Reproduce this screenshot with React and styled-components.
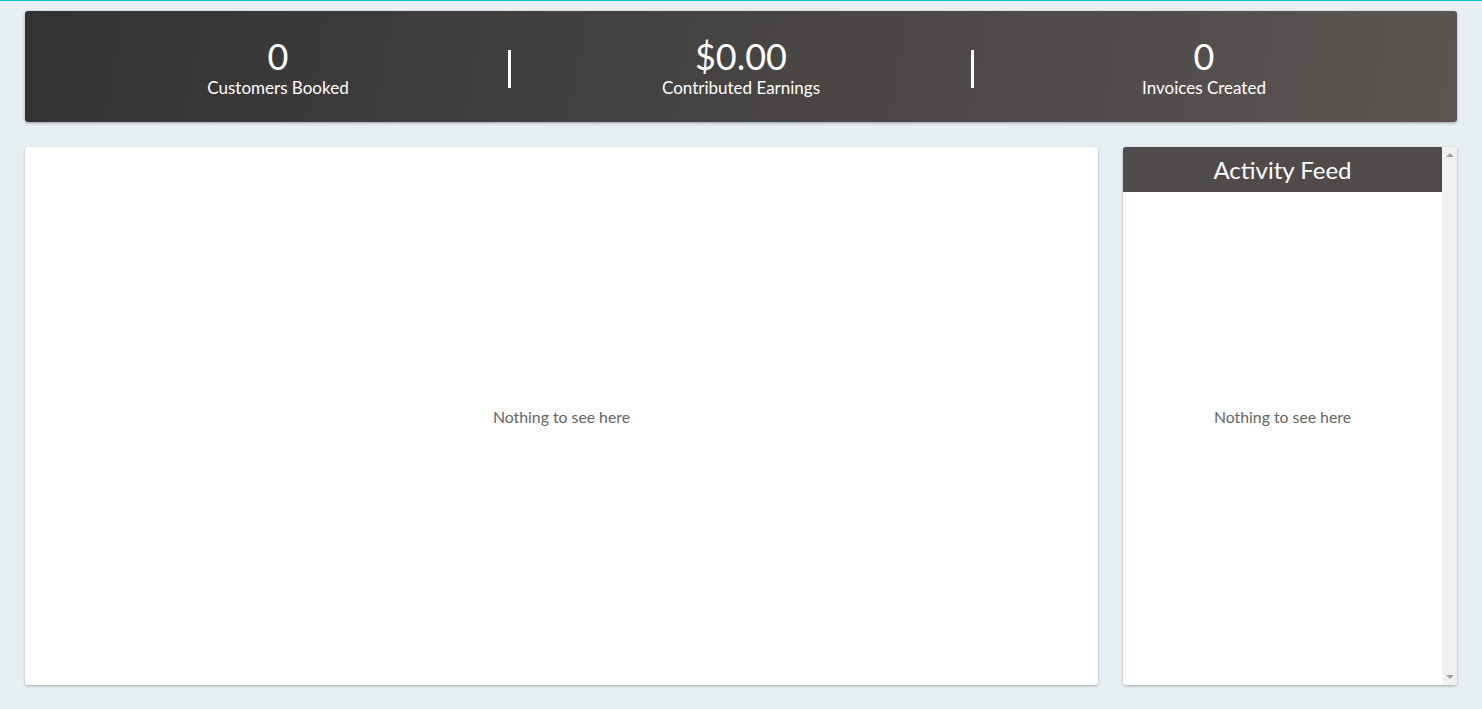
import React from "react";
import styled, { createGlobalStyle } from "styled-components";

const Global = createGlobalStyle`
  html, body { margin: 0; padding: 0; }
  body {
    background: #e7eff2;
    border-top: 1px solid #14c4cc;
    font-family: Lato, "Open Sans", sans-serif;
    height: 708px;
    overflow: hidden;
  }
`;

const Page = styled.div`
  padding: 10px 25px 0 25px;
  display: flex;
  flex-direction: column;
  gap: 25px;
`;

const Banner = styled.div`
  height: 111px;
  box-sizing: border-box;
  padding: 1px 23px 0 23px;
  border-radius: 3px;
  background: linear-gradient(100deg, #333333 0%, #474444 50%, #5b5553 100%);
  box-shadow: 0 1px 3px rgba(0, 0, 0, 0.35);
  display: flex;
  align-items: center;
  color: #ffffff;
`;

const Stat = styled.div`
  flex: 1;
  display: flex;
  flex-direction: column;
  align-items: center;
`;

const Value = styled.div`
  font-size: 36px;
  line-height: 42px;
  font-weight: 400;
`;

const Label = styled.div`
  font-size: 17px;
  line-height: 22px;
`;

const Divider = styled.div`
  width: 3px;
  height: 38px;
  background: #ffffff;
  margin-top: 4px;
`;

const Main = styled.div`
  display: grid;
  grid-template-columns: 1fr 334px;
  gap: 25px;
  height: 538px;
`;

const Card = styled.div`
  background: #ffffff;
  border-radius: 3px;
  box-shadow: 0 1px 3px rgba(0, 0, 0, 0.28);
  display: flex;
  flex-direction: column;
  overflow: hidden;
`;

const FeedCard = styled(Card)`
  flex-direction: row;
`;

const FeedBody = styled.div`
  flex: 1;
  display: flex;
  flex-direction: column;
`;

const FeedHeader = styled.div`
  height: 45px;
  flex: none;
  background: #4f4b4a;
  color: #ffffff;
  font-size: 24px;
  display: flex;
  align-items: center;
  justify-content: center;
`;

const Empty = styled.div`
  flex: 1;
  display: flex;
  align-items: center;
  justify-content: center;
  color: #666666;
  font-size: 15.8px;
  margin-top: ${(p) => p.$shift || 0}px;
`;

const ScrollTrack = styled.div`
  width: 15px;
  flex: none;
  background: #f1f1f1;
  display: flex;
  flex-direction: column;
  justify-content: space-between;
  align-items: center;
  padding: 6px 0;
  box-sizing: border-box;
`;

const Arrow = styled.div`
  width: 0;
  height: 0;
  border-left: 4px solid transparent;
  border-right: 4px solid transparent;
  ${(p) =>
    p.$down
      ? "border-top: 4px solid #a3a3a3;"
      : "border-bottom: 4px solid #a3a3a3;"}
`;

export default function App() {
  return (
    <>
      <Global />
      <Page>
        <Banner>
          <Stat>
            <Value>0</Value>
            <Label>Customers Booked</Label>
          </Stat>
          <Divider />
          <Stat>
            <Value>$0.00</Value>
            <Label>Contributed Earnings</Label>
          </Stat>
          <Divider />
          <Stat>
            <Value>0</Value>
            <Label>Invoices Created</Label>
          </Stat>
        </Banner>
        <Main>
          <Card>
            <Empty>Nothing to see here</Empty>
          </Card>
          <FeedCard>
            <FeedBody>
              <FeedHeader>Activity Feed</FeedHeader>
              <Empty $shift={-45}>Nothing to see here</Empty>
            </FeedBody>
            <ScrollTrack>
              <Arrow />
              <Arrow $down />
            </ScrollTrack>
          </FeedCard>
        </Main>
      </Page>
    </>
  );
}
